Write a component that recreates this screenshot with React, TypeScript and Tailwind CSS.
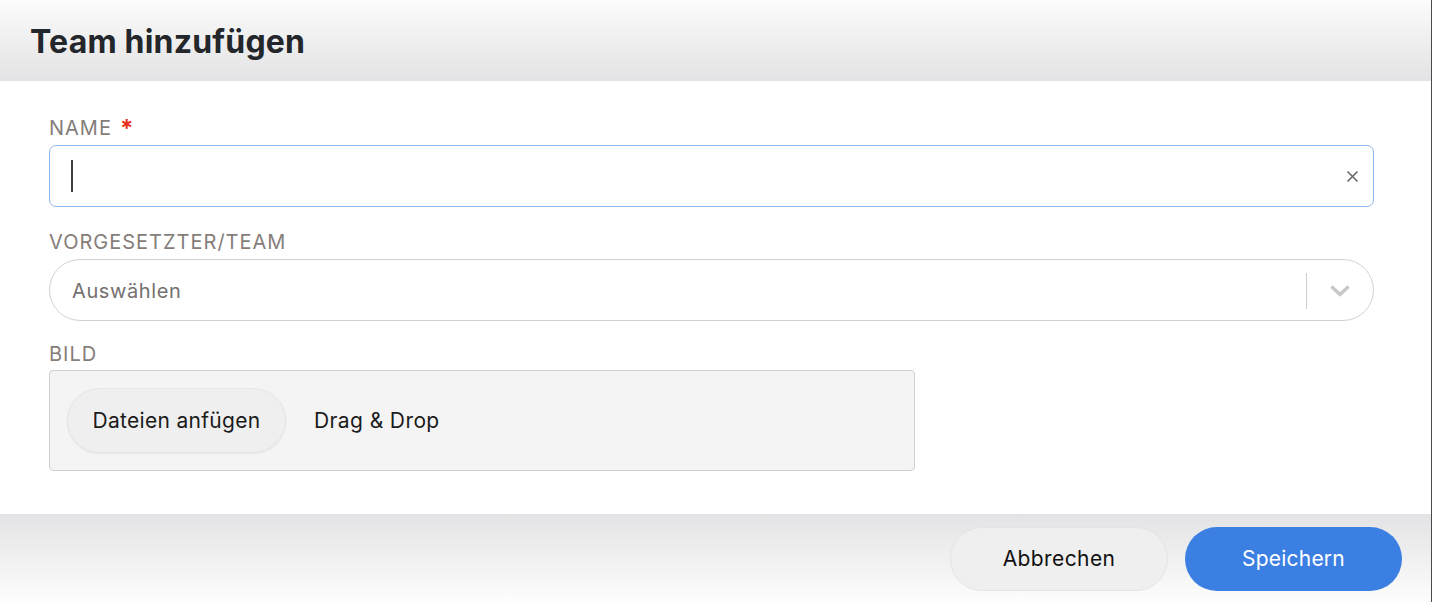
import { useState } from 'react';

const font = { fontFamily: '"Inter", "Open Sans", sans-serif' };

const Label = ({ text, required }: { text: string; required?: boolean }) => (
  <div className="flex items-center h-[22px] text-[20px] leading-none tracking-[1px] text-[#857d7a] uppercase pt-[2px]">
    {text}
    {required && <span className="ml-[8px] mt-[2px] text-[24px] text-[#e8321e] font-bold">*</span>}
  </div>
);

export default function App() {
  const [name, setName] = useState('');

  return (
    <div style={font} className="w-[1432px] h-[602px] flex flex-col bg-white border-r border-[#4a4a4a] overflow-hidden">
      {/* Header */}
      <div className="h-[81px] shrink-0 flex items-center px-[30px] pt-[2px] bg-gradient-to-b from-[#fbfbfb] to-[#e3e3e5]">
        <h1 className="text-[32px] font-bold text-[#23262a] tracking-[0.2px]">Team hinzufügen</h1>
      </div>

      {/* Body */}
      <div className="flex-1 flex flex-col pl-[49px] pr-[57px] pt-[35px]">
        <Label text="Name" required />
        <div className="mt-[7px] h-[62px] flex items-center rounded-[7px] border border-[#8fb8ec] pl-[21px] pr-[14px]">
          <div className="w-[2px] h-[32px] bg-[#3d3f44]" />
          <input
            value={name}
            onChange={(e) => setName(e.target.value)}
            className="flex-1 h-full outline-none bg-transparent text-[19px]"
          />
          <svg width="13" height="13" viewBox="0 0 13 13" className="shrink-0">
            <path d="M1.5 1.5 L11.5 11.5 M11.5 1.5 L1.5 11.5" stroke="#6e6866" strokeWidth="1.6" />
          </svg>
        </div>

        <div className="mt-[23px]">
          <Label text="Vorgesetzter/Team" />
        </div>
        <div className="mt-[7px] h-[62px] flex items-center rounded-full border border-[#d2d2d2] pl-[22px] pt-[2px]">
          <span className="flex-1 text-[20px] tracking-[0.6px] text-[#747070]">Auswählen</span>
          <div className="w-px h-[36px] bg-[#cfcfcf]" />
          <div className="w-[66px] flex justify-center">
            <svg width="20" height="12" viewBox="0 0 20 12">
              <path d="M2.5 2.5 L10 9.5 L17.5 2.5" stroke="#c9c9c9" strokeWidth="3.6" fill="none" strokeLinecap="round" strokeLinejoin="round" />
            </svg>
          </div>
        </div>

        <div className="mt-[21px]">
          <Label text="Bild" />
        </div>
        <div className="mt-[6px] w-[866px] h-[101px] flex items-center rounded-[4px] border border-[#d0d0d0] bg-[#f4f4f4] pl-[17px]">
          <button className="h-[65px] w-[219px] rounded-full bg-[#efefef] border border-[#e6e6e6] shadow-[0_1px_2px_rgba(0,0,0,0.06)] text-[21px] tracking-[0.3px] text-[#1b1b1b] pt-[1px]">
            Dateien anfügen
          </button>
          <span className="ml-[28px] text-[21px] tracking-[0.4px] text-[#1b1b1b] pt-[1px]">Drag &amp; Drop</span>
        </div>
      </div>

      {/* Footer */}
      <div className="h-[88px] shrink-0 flex items-center justify-end gap-[17px] pr-[29px] pt-[2px] bg-gradient-to-b from-[#e3e3e5] to-[#fdfdfd]">
        <button className="w-[218px] h-[64px] rounded-full bg-[#efefef] border border-[#e4e4e4] text-[21px] tracking-[0.4px] text-[#111]">
          Abbrechen
        </button>
        <button className="w-[217px] h-[64px] rounded-full bg-[#3b7fe3] text-[21px] tracking-[0.2px] text-white">
          Speichern
        </button>
      </div>
    </div>
  );
}
